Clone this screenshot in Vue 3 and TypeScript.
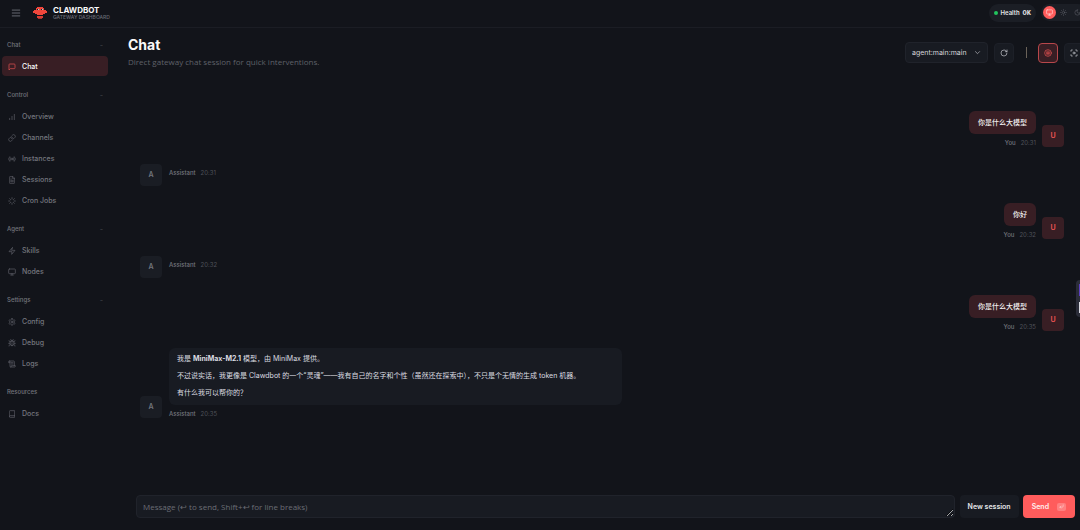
<script setup lang="ts">
import { ref } from 'vue'

interface NavItem { label: string; icon: string; active?: boolean }
interface NavGroup { label: string; collapsible: boolean; items: NavItem[] }
interface Message { role: 'user' | 'assistant'; time: string; text?: string; rich?: boolean }

const icons: Record<string, string> = {
  chat: '<path d="M21 15a2 2 0 0 1-2 2H7l-4 4V5a2 2 0 0 1 2-2h14a2 2 0 0 1 2 2z"/>',
  overview: '<path d="M12 20V10M19 20V4M5 20v-4"/>',
  channels: '<path d="M10 13a5 5 0 0 0 7.54.54l3-3a5 5 0 0 0-7.07-7.07l-1.72 1.71"/><path d="M14 11a5 5 0 0 0-7.54-.54l-3 3a5 5 0 0 0 7.07 7.07l1.71-1.71"/>',
  instances: '<circle cx="12" cy="12" r="2"/><path d="M16.24 7.76a6 6 0 0 1 0 8.49M7.76 16.24a6 6 0 0 1 0-8.49M19.07 4.93a10 10 0 0 1 0 14.14M4.93 19.07a10 10 0 0 1 0-14.14"/>',
  sessions: '<path d="M14 2H6a2 2 0 0 0-2 2v16a2 2 0 0 0 2 2h12a2 2 0 0 0 2-2V8z"/><path d="M14 2v6h6M16 13H8M16 17H8M10 9H8"/>',
  cron: '<path d="M12 2v4M12 18v4M4.93 4.93l2.83 2.83M16.24 16.24l2.83 2.83M2 12h4M18 12h4M4.93 19.07l2.83-2.83M16.24 7.76l2.83-2.83"/>',
  skills: '<path d="M13 2 3 14h9l-1 8 10-12h-9z"/>',
  nodes: '<rect x="2" y="3" width="20" height="14" rx="2"/><path d="M8 21h8M12 17v4"/>',
  config: '<path d="M12.22 2h-.44a2 2 0 0 0-2 2v.18a2 2 0 0 1-1 1.73l-.43.25a2 2 0 0 1-2 0l-.15-.08a2 2 0 0 0-2.73.73l-.22.38a2 2 0 0 0 .73 2.73l.15.1a2 2 0 0 1 1 1.72v.51a2 2 0 0 1-1 1.74l-.15.09a2 2 0 0 0-.73 2.73l.22.38a2 2 0 0 0 2.73.73l.15-.08a2 2 0 0 1 2 0l.43.25a2 2 0 0 1 1 1.73V20a2 2 0 0 0 2 2h.44a2 2 0 0 0 2-2v-.18a2 2 0 0 1 1-1.73l.43-.25a2 2 0 0 1 2 0l.15.08a2 2 0 0 0 2.73-.73l.22-.39a2 2 0 0 0-.73-2.73l-.15-.08a2 2 0 0 1-1-1.74v-.5a2 2 0 0 1 1-1.74l.15-.09a2 2 0 0 0 .73-2.73l-.22-.38a2 2 0 0 0-2.73-.73l-.15.08a2 2 0 0 1-2 0l-.43-.25a2 2 0 0 1-1-1.73V4a2 2 0 0 0-2-2z"/><circle cx="12" cy="12" r="3"/>',
  debug: '<path d="m8 2 1.88 1.88M14.12 3.88 16 2M9 7.13v-1a3 3 0 1 1 6 0v1"/><path d="M12 20c-3.3 0-6-2.7-6-6v-3a4 4 0 0 1 4-4h4a4 4 0 0 1 4 4v3c0 3.3-2.7 6-6 6M12 20v-9M6.53 9C4.6 8.8 3 7.1 3 5M6 13H2M3 21c0-2.1 1.7-3.9 3.8-4M20.97 5c0 2.1-1.6 3.8-3.5 4M22 13h-4M17.2 17c2.1.1 3.8 1.9 3.8 4"/>',
  logs: '<path d="M8 21h12a2 2 0 0 0 2-2v-2H10v2a2 2 0 1 1-4 0V5a2 2 0 1 0-4 0v3h4"/><path d="M19 17V5a2 2 0 0 0-2-2H4M15 8h-5M15 12h-5"/>',
  docs: '<path d="M4 19.5v-15A2.5 2.5 0 0 1 6.5 2H20v20H6.5a2.5 2.5 0 0 1 0-5H20"/>',
  refresh: '<path d="M21 12a9 9 0 1 1-9-9c2.52 0 4.93 1 6.74 2.74L21 8"/><path d="M21 3v5h-5"/>',
  brain: '<circle cx="12" cy="12" r="10"/><path d="M12 6v12M8.500 8v3M15.500 8v3M8 12.500h8M8.500 14v2M15.500 14v2"/>',
  focus: '<path d="M3 7V3h4M21 7V3h-4M3 17v4h4M21 17v4h-4"/><circle cx="12" cy="12" r="3"/>',
  sun: '<circle cx="12" cy="12" r="4"/><path d="M12 2v2M12 20v2M4.93 4.93l1.41 1.41M17.66 17.66l1.41 1.41M2 12h2M20 12h2M6.34 17.66l-1.41 1.41M19.07 4.93l-1.41 1.41"/>',
  moon: '<path d="M12 3a6 6 0 0 0 9 9 9 9 0 1 1-9-9z"/>',
  menu: '<path d="M3 5h18M3 12h18M3 19h18"/>',
  enter: '<path d="M9 10l-5 5 5 5M20 4v7a4 4 0 0 1-4 4H4"/>'
}

const groups: NavGroup[] = [
  { label: 'Chat', collapsible: true, items: [{ label: 'Chat', icon: 'chat', active: true }] },
  {
    label: 'Control', collapsible: true, items: [
      { label: 'Overview', icon: 'overview' },
      { label: 'Channels', icon: 'channels' },
      { label: 'Instances', icon: 'instances' },
      { label: 'Sessions', icon: 'sessions' },
      { label: 'Cron Jobs', icon: 'cron' }
    ]
  },
  { label: 'Agent', collapsible: true, items: [{ label: 'Skills', icon: 'skills' }, { label: 'Nodes', icon: 'nodes' }] },
  {
    label: 'Settings', collapsible: true, items: [
      { label: 'Config', icon: 'config' },
      { label: 'Debug', icon: 'debug' },
      { label: 'Logs', icon: 'logs' }
    ]
  },
  { label: 'Resources', collapsible: false, items: [{ label: 'Docs', icon: 'docs' }] }
]

const messages: Message[] = [
  { role: 'user', time: '20:31', text: '你是什么大模型' },
  { role: 'assistant', time: '20:31' },
  { role: 'user', time: '20:32', text: '你好' },
  { role: 'assistant', time: '20:32' },
  { role: 'user', time: '20:35', text: '你是什么大模型' },
  { role: 'assistant', time: '20:35', rich: true }
]

const session = ref('main')
const draft = ref('')
</script>

<template>
  <div class="shell">
    <header class="topbar">
      <button class="menu" aria-label="Toggle menu"><svg class="ico" viewBox="0 0 24 24" v-html="icons.menu"></svg></button>
      <svg class="logo" viewBox="0 0 14 12" aria-hidden="true">
        <g fill="#f0473c">
          <rect x="4" y="0" width="6" height="1" />
          <rect x="3" y="1" width="8" height="3" />
          <rect x="1" y="3" width="12" height="1" />
          <rect x="0" y="4" width="14" height="2" />
          <rect x="2" y="6" width="10" height="1" />
          <rect x="4" y="7" width="6" height="1" />
        </g>
        <rect x="4" y="9" width="6" height="2" fill="#d93d34" />
        <rect x="5" y="11" width="4" height="1" fill="#a92f2c" />
        <path fill="#33131a" d="M4 2h2v1H4zM8 2h2v1H8z" />
        <path fill="#8fd8dc" d="M5 2h1v1H5zM9 2h1v1H9z" />
      </svg>
      <div class="brand">
        <strong>CLAWDBOT</strong>
        <span>GATEWAY DASHBOARD</span>
      </div>
      <div class="status">
        <div class="health"><i></i><span>Health</span><code>OK</code></div>
        <div class="themes">
          <button class="on" aria-label="System theme"><svg class="ico" viewBox="0 0 24 24" v-html="icons.nodes"></svg></button>
          <button aria-label="Light theme"><svg class="ico" viewBox="0 0 24 24" v-html="icons.sun"></svg></button>
          <button aria-label="Dark theme"><svg class="ico" viewBox="0 0 24 24" v-html="icons.moon"></svg></button>
        </div>
      </div>
    </header>

    <div class="body">
      <nav class="sidebar">
        <section v-for="g in groups" :key="g.label" class="group">
          <button v-if="g.collapsible" class="group-label"><span>{{ g.label }}</span><span class="fold">−</span></button>
          <div v-else class="group-label"><span>{{ g.label }}</span></div>
          <a v-for="item in g.items" :key="item.label" href="#" class="item" :class="{ active: item.active }">
            <svg class="ico" viewBox="0 0 24 24" v-html="icons[item.icon]"></svg>{{ item.label }}
          </a>
        </section>
      </nav>

      <main class="content">
        <div class="heading">
          <div>
            <h1>Chat</h1>
            <p>Direct gateway chat session for quick interventions.</p>
          </div>
          <div class="tools">
            <div class="picker">
              <select v-model="session" aria-label="Session">
                <option value="main">agent:main:main</option>
              </select>
              <svg class="ico" viewBox="0 0 24 24"><path d="m5 9 7 7 7-7" /></svg>
            </div>
            <button class="tool" aria-label="Refresh"><svg class="ico" viewBox="0 0 24 24" v-html="icons.refresh"></svg></button>
            <span class="divider"></span>
            <button class="tool on" aria-label="Show thinking"><svg class="ico" viewBox="0 0 24 24" v-html="icons.brain"></svg></button>
            <button class="tool" aria-label="Focus mode"><svg class="ico" viewBox="0 0 24 24" v-html="icons.focus"></svg></button>
          </div>
        </div>

        <div class="thread">
          <article v-for="(m, i) in messages" :key="i" class="message" :class="m.role">
            <div class="avatar">{{ m.role === 'user' ? 'U' : 'A' }}</div>
            <div class="stack">
              <div v-if="m.text" class="bubble">{{ m.text }}</div>
              <div v-if="m.rich" class="bubble rich">
                <p>我是 <b>MiniMax-M2.1</b> 模型，由 MiniMax 提供。</p>
                <p>不过说实话，我更像是 Clawdbot 的一个“灵魂”——我有自己的名字和个性（虽然还在探索中），不只是个无情的生成 token 机器。</p>
                <p>有什么我可以帮你的？</p>
              </div>
              <div class="meta"><span>{{ m.role === 'user' ? 'You' : 'Assistant' }}</span><time>{{ m.time }}</time></div>
            </div>
          </article>
        </div>

        <form class="composer" @submit.prevent>
          <textarea v-model="draft" rows="1" aria-label="Message" placeholder="Message (↩ to send, Shift+↩ for line breaks)"></textarea>
          <button type="button" class="secondary">New session</button>
          <button type="submit" class="primary">Send<kbd><svg class="ico" viewBox="0 0 24 24" v-html="icons.enter"></svg></kbd></button>
        </form>
      </main>
    </div>

    <div class="edge-tab" aria-hidden="true"><i></i><i></i></div>
  </div>
</template>

<style>
body {
  background: #12141a;
  overflow: hidden;
}
</style>

<style scoped>
* {
  box-sizing: border-box;
}
.shell {
  position: relative;
  display: flex;
  flex-direction: column;
  height: 100vh;
  overflow: hidden;
  background: #12141a;
  color: #e4e4e7;
  font: 7px/12px Inter, "Liberation Sans", "Noto Sans CJK SC", sans-serif;
}
button, select, textarea {
  margin: 0;
  padding: 0;
  border: 0;
  background: none;
  color: inherit;
  font: inherit;
}
.ico {
  flex: none;
  width: 8px;
  height: 8px;
  fill: none;
  stroke: currentColor;
  stroke-width: 2;
  stroke-linecap: round;
  stroke-linejoin: round;
}
.topbar {
  flex: none;
  display: flex;
  align-items: center;
  height: 28px;
  padding: 0 0 2px 10px;
  border-bottom: 1px solid #1b1d24;
}
.menu {
  display: flex;
  padding: 1px;
  margin-right: 11px;
  color: #777982;
}
.menu .ico {
  width: 10px;
  height: 10px;
}
.logo {
  width: 14px;
  height: 12px;
  margin-right: 6px;
}
.brand {
  display: flex;
  flex-direction: column;
  padding-top: 2px;
}
.brand strong {
  font-size: 8px;
  line-height: 8px;
  color: #fafafa;
}
.brand span {
  font-size: 5px;
  line-height: 7px;
  font-weight: 500;
  color: #696b73;
}
.status {
  display: flex;
  align-items: center;
  gap: 5px;
  margin: 0 -6px 0 auto;
}
.health {
  display: flex;
  align-items: center;
  gap: 3px;
  height: 18px;
  padding: 0 5px;
  border-radius: 9px;
  background: #1b1e25;
  font-size: 6px;
  font-weight: 600;
}
.health i {
  width: 4px;
  height: 4px;
  border-radius: 50%;
  background: #22c55e;
}
.health code {
  font: 7px/12px "Liberation Mono", monospace;
  font-weight: 700;
}
.themes {
  display: flex;
  gap: 1px;
  height: 17px;
  padding: 2px;
  border-radius: 9px;
  background: #1b1e25;
}
.themes button {
  display: grid;
  place-items: center;
  width: 13px;
  height: 13px;
  border-radius: 50%;
  color: #5b5d65;
}
.themes .ico {
  width: 7px;
  height: 7px;
}
.themes .on {
  background: #ff5c5c;
  color: #ffe2e2;
}
.body {
  flex: 1;
  display: flex;
  min-height: 0;
}
.sidebar {
  flex: none;
  display: flex;
  flex-direction: column;
  gap: 9px;
  width: 110px;
  padding: 7px 2px 0;
}
.group {
  display: flex;
  flex-direction: column;
  gap: 1px;
}
.group-label {
  display: flex;
  align-items: center;
  justify-content: space-between;
  height: 20px;
  padding: 0 5px;
  font-size: 6px;
  font-weight: 500;
  color: #74767e;
}
.fold {
  font-size: 5px;
  opacity: 0.6;
}
.item {
  display: flex;
  align-items: center;
  gap: 6px;
  height: 20px;
  padding: 1px 6px 0;
  border-radius: 4px;
  color: #74767e;
  font-weight: 500;
  text-decoration: none;
}
.item:not(.active) .ico {
  opacity: 0.8;
}
.item.active {
  background: #381e24;
  color: #fafafa;
}
.item.active .ico {
  color: #ef5555;
}
.content {
  flex: 1;
  display: flex;
  flex-direction: column;
  min-width: 0;
}
.heading {
  display: flex;
  justify-content: space-between;
  padding: 9px 0 0 18px;
  height: 45px;
}
h1 {
  margin: 0;
  font-size: 14px;
  line-height: 16px;
  font-weight: 700;
  color: #fafafa;
}
.heading p {
  margin: 3px 0 0;
  font: 8px/12px "Open Sans", "Noto Sans", sans-serif;
  color: #5f6169;
}
.tools {
  display: flex;
  align-items: center;
  align-self: flex-start;
  gap: 6px;
  margin: 5px -4px 0 0;
}
.picker {
  position: relative;
  color: #d5d6da;
}
.picker select {
  appearance: none;
  display: block;
  width: 83px;
  height: 21px;
  padding: 0 18px 0 6px;
  border: 1px solid #20232b;
  border-radius: 4px;
  background: #181b22;
}
.picker .ico {
  position: absolute;
  right: 7px;
  top: 7px;
  width: 7px;
  height: 7px;
  pointer-events: none;
}
.tool {
  display: grid;
  place-items: center;
  width: 20px;
  height: 20px;
  border: 1px solid #1d2028;
  border-radius: 4px;
  background: #181b22;
  color: #c9cad0;
}
.tool.on {
  border-color: #b8474b;
  background: #381e24;
  color: #ef5555;
}
.divider {
  width: 1px;
  height: 11px;
  margin: 0 5px 0 6px;
  background: #6a6259;
}
.thread {
  flex: 1;
  display: flex;
  flex-direction: column;
  gap: 17px;
  padding: 38px 16px 0 30px;
}
.message {
  display: flex;
  align-items: flex-end;
  gap: 7px;
}
.message.user {
  flex-direction: row-reverse;
  gap: 6px;
}
.avatar {
  flex: none;
  display: grid;
  place-items: center;
  width: 22px;
  height: 22px;
  border-radius: 4px;
  background: #1a1d24;
  color: #73757d;
  font-weight: 600;
}
.user .avatar {
  background: #381e24;
  color: #f25555;
}
.stack {
  flex: 1;
  display: flex;
  flex-direction: column;
  align-items: flex-start;
}
.assistant .stack {
  align-self: flex-start;
}
.user .stack {
  align-items: flex-end;
}
.bubble {
  padding: 6px 9px 5px;
  border-radius: 6px;
  background: #381e24;
  color: #f0eeef;
  font-weight: 500;
}
.bubble.rich {
  width: 51%;
  max-width: 453px;
  padding: 5px 8px 6px;
  background: #181b22;
  color: #dcdde1;
  font-weight: 400;
}
.rich p {
  margin: 0 0 5px;
}
.rich p:last-child {
  margin: 0;
}
.meta {
  display: flex;
  gap: 5px;
  margin-top: 5px;
  font-size: 6px;
  line-height: 8px;
  font-weight: 500;
  color: #74767e;
}
.meta time {
  font-weight: 400;
  color: #4f5159;
}
.composer {
  display: flex;
  gap: 4px;
  padding: 0 5px 12px 26px;
}
.composer textarea {
  flex: 1;
  height: 23px;
  margin-right: 1px;
  padding: 5px 6px;
  border: 1px solid #20232b;
  border-radius: 4px;
  background: #181b22;
  font: 8px/12px "Open Sans", "Noto Sans", sans-serif;
  resize: vertical;
  overflow: hidden;
}
.composer textarea::placeholder {
  color: #6b6d75;
}
.composer button {
  height: 23px;
  border-radius: 4px;
  font-weight: 600;
}
.composer .secondary {
  padding: 0 8px;
  background: #181b22;
}
.composer .primary {
  display: flex;
  align-items: center;
  gap: 8px;
  padding: 0 9px;
  background: #ff5c5c;
  color: #fff0f0;
}
kbd {
  display: grid;
  place-items: center;
  width: 9px;
  height: 8px;
  border-radius: 2px;
  background: #ff8080;
}
kbd .ico {
  width: 5px;
  height: 5px;
}
/* Floating handle docked to the window edge */
.edge-tab {
  position: absolute;
  right: 0;
  top: 280px;
  display: flex;
  flex-direction: column;
  align-items: flex-end;
  gap: 6px;
  width: 4px;
  height: 37px;
  padding: 4px 0;
  border-radius: 4px 0 0 4px;
  background: #2b2d39;
}
.edge-tab i {
  width: 1px;
  height: 12px;
  background: #5b3fc0;
}
.edge-tab i + i {
  background: #d9dae2;
}
</style>
